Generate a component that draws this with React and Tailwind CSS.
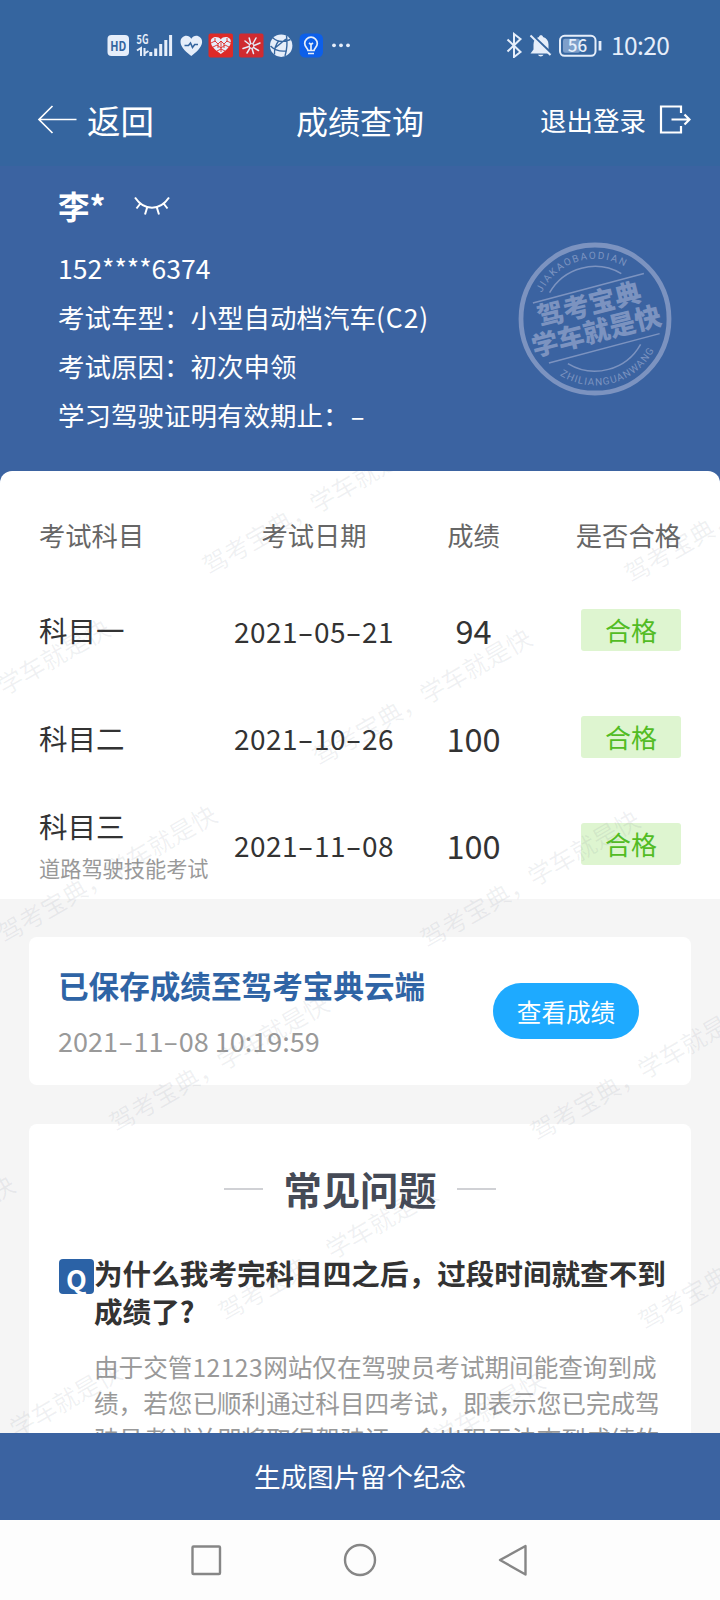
import React from "react";

const EXAMS = [
    { name: "科目一", date: "2021-05-21", score: "94" },
    { name: "科目二", date: "2021-10-26", score: "100" },
    { name: "科目三", note: "道路驾驶技能考试", date: "2021-11-08", score: "100" },
];

// centre of the first glyph of each repeated mark, relative to the scroll area
const MARKS = [
    [215, 89], [637, 97], [-97, 271], [325, 280], [10, 457], [433, 462],
    [122, 646], [543, 655], [-192, 827], [231, 835], [651, 844], [-85, 1014], [338, 1023],
];

// dashes are stretched to the width of a digit
function DateText({ value }) {
    return value.split("").map((c, i) =>
        c === "-" ? <span key={i} className="inline-block w-[0.57em] scale-x-165 text-center">-</span> : c
    );
}

function StatusBar() {
    return (
        <div className="flex h-[90px] items-center pl-[107px] pr-[50px] text-[#e6eefa]">
            <svg className="h-[26px] w-[244px] shrink-0" viewBox="107 32 244 26" fill="currentColor">
                {/* HD */}
                <rect x="107.5" y="35" width="21.5" height="21" rx="4" />
                <text x="118.3" y="50.5" fontSize="13.5" fontWeight="700" textAnchor="middle" textLength="16" lengthAdjust="spacingAndGlyphs" fill="#35659f">HD</text>
                {/* 5G signal */}
                <text x="136.5" y="43.500" fontSize="12.500" fontWeight="700" textLength="12" lengthAdjust="spacingAndGlyphs">5G</text>
                <path d="M137 50.500l4-2.500v8M144.500 48v8M144.500 53.500l4-2.500" fill="none" stroke="currentColor" strokeWidth="2" />
                <path d="M150.800 56v-4M155.700 56v-7.500M160.700 56v-12M165.800 56v-16M170.600 56v-21" stroke="currentColor" strokeWidth="3" />
                {/* health */}
                <path d="M191.300 56c-4-3-10.800-8.500-10.800-14 0-6.500 8-8.500 10.800-3.200 2.800-5.300 10.800-3.300 10.800 3.200 0 5.500-6.800 11-10.800 14z" />
                <path d="M184.500 45.500h4l2-2.500 2 4.500 2.200-3h3.300" fill="none" stroke="#35659f" strokeWidth="1.600" />
                {/* red apps */}
                <rect x="208.500" y="33.500" width="24.500" height="24" rx="2" fill="#dd2a27" />
                <path d="M220.800 54c-4-3-10-7-10-12.200 0-5.500 7.500-6 10-2.300 2.500-3.700 10-3.200 10 2.300 0 5.200-6 9.200-10 12.200z" />
                <path d="M211 43l4-2 3 3 3-3 3 3 3-3 4 2M213 47l4-2 4 3 4-3 4 2M217 51l4-2 4 2M215 38v4M218 44v4M221 41v11M224 44v4M227 38v4" fill="none" stroke="#dd2a27" strokeWidth="0.900" />
                <rect x="239" y="33.500" width="24.500" height="24" rx="2" fill="#cf2b30" />
                <path d="M250.700 43.500l-1.500-5.500M253 43.500l3-5.500M254 45.500l6-2.500M253.500 47.500l5 3M252 48.500l1.500 5M250 48l-3 5M249 46.500l-6 2M249.500 44.500l-4.500-3.500" fill="none" stroke="currentColor" strokeWidth="1.500" strokeLinecap="round" />
                <circle cx="251.500" cy="46" r="2.400" fill="none" stroke="currentColor" />
                {/* browser */}
                <circle cx="281.200" cy="45.700" r="11.200" />
                <path d="M273 38q7 6 17.500 1.500M286.500 35.500q1.500 11-1.500 20.500M270.500 46q6 6 15.500 5M279 40.500q-5 6-4.500 14M275 48l11-9" fill="none" stroke="#35659f" strokeWidth="1.400" />
                {/* bulb */}
                <rect x="299.500" y="33.500" width="23.500" height="24" rx="5.500" fill="#0d5fe9" />
                <path d="M308 50.500c0-2-3.300-3.500-3.300-7a6.300 6.300 0 0 1 12.600 0c0 3.500-3.300 5-3.300 7zM308 53.500h6M311 50v-6M309 43l2 1.500 2-1.500" fill="none" stroke="currentColor" strokeWidth="1.700" />
                <circle cx="334" cy="45.300" r="1.900" /><circle cx="341" cy="45.300" r="1.900" /><circle cx="348" cy="45.300" r="1.900" />
            </svg>
            <svg className="ml-auto h-[26px] w-[98px] shrink-0" viewBox="505 32 98 26" fill="none" stroke="currentColor">
                <path d="M507.500 39.500l13 12.500-6.500 5v-23l6.500 5-13 12.500" strokeWidth="2" />
                <path d="M530.500 53.500l3-4v-5c0-4 2-6.500 5.500-7.500 0-2.500 4-2.500 4 0 3.500 1 5.500 3.500 5.500 7.500v5l3 4z" fill="currentColor" stroke="none" />
                <path d="M538 54.800a3 3 0 0 0 5.500 0z" fill="currentColor" stroke="none" />
                <path d="M531.500 34.500l20 19" stroke="#35659f" strokeWidth="2.500" />
                <path d="M530.500 35.500l20 19.500" strokeWidth="2" />
                <rect x="560" y="35.800" width="35.500" height="20" rx="4.500" strokeWidth="2" />
                <rect x="563" y="38.800" width="17" height="14" rx="2" fill="#7e9fca" stroke="none" />
                <path d="M600 41v9.500" strokeWidth="2.800" />
                <text x="577.500" y="52" fontSize="17" fontWeight="500" textAnchor="middle" fill="currentColor" stroke="none">56</text>
            </svg>
            <span className="ml-[8px] w-[59px] whitespace-nowrap text-[24.500px] leading-none tracking-[-0.600px]">10:20</span>
        </div>
    );
}

function TitleBar() {
    return (
        <div className="grid h-[76px] grid-cols-[259px_128px_1fr] pb-[16px] pl-[37px] pr-[29px] text-white">
            <div className="flex items-center">
                <svg className="h-[30px] w-[40px]" viewBox="0 0 40 30" fill="none" stroke="currentColor" strokeWidth="1.700">
                    <path d="M15.500 1L2 14.500 15.500 28M2 14.500h37.500" />
                </svg>
                <span className="ml-[10px] text-[33.500px] leading-none">返回</span>
            </div>
            <span className="self-center text-[32px] leading-none">成绩查询</span>
            <div className="flex items-center justify-end">
                <span className="text-[26.500px] leading-none">退出登录</span>
                <svg className="ml-[13px] h-[30px] w-[32px]" viewBox="0 0 32 30" fill="none" stroke="currentColor" strokeWidth="2.200">
                    <path d="M22 8V1.500H2v26h20V21M12.500 14.500H30M25.500 9.500l5 5-5 5" />
                </svg>
            </div>
        </div>
    );
}

function Stamp() {
    return (
        <svg className="h-[156px] w-[156px]" viewBox="17.400 20.700 156 156" fill="none" stroke="currentColor">
            <defs>
                <path id="stamp-top" d="M40 78A59 59 0 0 1 152 80" />
                <path id="stamp-bottom" d="M50 147A66.500 66.500 0 0 0 161 111" />
            </defs>
            <circle cx="95.400" cy="98.700" r="74" strokeWidth="4.800" />
            <path d="M50 72.300A52.300 52.300 0 0 1 121.700 53.300M68.300 143.300A52.300 52.300 0 0 0 141 124M33.300 82.700l111-29.400M49.300 142.700l110.700-29.400" strokeWidth="1.500" />
            <g fill="currentColor" stroke="none">
                <text transform="translate(40.500 106.500) rotate(-14.200)" fontSize="26.500" fontWeight="900">驾考宝典</text>
                <text transform="translate(35 136.500) rotate(-14.200)" fontSize="26.500" fontWeight="900">学车就是快</text>
                <g fontSize="10" style={{ fontFamily: "Roboto, sans-serif" }}>
                    <text textLength="97"><textPath href="#stamp-top" startOffset="6">JIAKAOBAODIAN</textPath></text>
                    <text textLength="109"><textPath href="#stamp-bottom" startOffset="13">ZHILIANGUANWANG</textPath></text>
                </g>
            </g>
        </svg>
    );
}

function Profile() {
    return (
        <div className="flex h-[305px] shrink-0 justify-between bg-[#3b63a1] pl-[58px] pr-[47px] text-white">
            <div className="pt-[16px]">
                <div className="flex h-[48px] items-center">
                    <span className="text-[31.500px] font-bold leading-none">李*</span>
                    <svg className="ml-[29px] h-[20px] w-[36px]" viewBox="0 0 36 20" fill="none" stroke="currentColor" strokeWidth="2">
                        <path d="M1 1.500C10 15 26 15 35 1.500M6 8l-3.500 4.500M13 12l-2 6.500M23 12l2 6.500M30 8l3.500 4.500" />
                    </svg>
                </div>
                <div className="mt-[13px] text-[26.500px] leading-[49px]">
                    <p>152****6374</p>
                    <p>考试车型：小型自动档汽车<span className="tracking-[0.900px]">(C2)</span></p>
                    <p>考试原因：初次申领</p>
                    <p>学习驾驶证明有效期止：<DateText value="-" /></p>
                </div>
            </div>
            <div className="pt-[75px] text-[#7c93c0]">
                <Stamp />
            </div>
        </div>
    );
}

function ExamTable() {
    return (
        <div className="bg-[#3b63a1]">
            <div className="h-[428px] rounded-t-[12px] bg-white pl-[39px] pr-[39px] pt-[38px] text-[#333]">
                <div className="grid h-[52px] grid-cols-[195px_160px_159px_128px] items-center text-[26.300px] leading-none text-[#666]">
                    <span>考试科目</span>
                    <span className="text-center">考试日期</span>
                    <span className="text-center">成绩</span>
                    <span className="text-right">是否合格</span>
                </div>
                <div className="pt-[16px]">
                    {EXAMS.map((exam) => (
                        <div key={exam.name} className="grid h-[107.300px] grid-cols-[195px_160px_159px_128px] items-center">
                            <div className="whitespace-nowrap text-[28.500px] leading-none">
                                {exam.name}
                                {exam.note && <p className="mt-[17px] text-[21.200px] leading-none text-[#999]">{exam.note}</p>}
                            </div>
                            <span className="whitespace-nowrap text-center text-[28px] leading-none tracking-[0.450px]"><DateText value={exam.date} /></span>
                            <span className="text-center text-[32.500px] leading-none">{exam.score}</span>
                            <span className="-mt-[2px] flex h-[42px] w-[100px] items-center justify-center justify-self-end rounded-[3px] bg-[#def5d0] text-[26px] leading-none text-[#52bc24]">合格</span>
                        </div>
                    ))}
                </div>
            </div>
        </div>
    );
}

function SavedCard() {
    return (
        <div className="mx-[29px] mt-[38px] flex h-[148px] items-center justify-between rounded-[8px] bg-white pl-[29px] pr-[52px]">
            <div className="pt-[3px]">
                <p className="text-[30.600px] font-bold leading-[40px] text-[#2f64a5]">已保存成绩至驾考宝典云端</p>
                <p className="mt-[16px] text-[27px] leading-[40px] text-[#999]"><DateText value="2021-11-08 10:19:59" /></p>
            </div>
            <button className="h-[56px] w-[146px] rounded-full bg-[#1eaaff] text-[24.600px] leading-none text-white">查看成绩</button>
        </div>
    );
}

function Faq() {
    return (
        <div className="mx-[29px] mt-[39px] h-[500px] rounded-[8px] bg-white pl-[30px] pr-[20px] pt-[35px]">
            <div className="mr-[10px] flex h-[60px] items-center justify-center gap-[20px]">
                <span className="h-[2px] w-[39px] bg-[#d0d1d5]" />
                <span className="text-[38.300px] font-bold leading-none text-[#454a56]">常见问题</span>
                <span className="h-[2px] w-[39px] bg-[#d0d1d5]" />
            </div>
            <div className="mt-[35px] flex text-[#333]">
                <span className="mt-[5px] flex h-[35px] w-[35px] shrink-0 items-center justify-center rounded-[4px] bg-[#2b62a6] pt-[3px] text-[27px] font-bold leading-none text-white">Q</span>
                <div>
                    <p className="whitespace-nowrap text-[28.600px] font-bold leading-[38px]">为什么我考完科目四之后，过段时间就查不到<br />成绩了?</p>
                    <p className="mt-[18px] whitespace-nowrap text-[24.600px] leading-[36px] text-[#999]">
                        由于交管<span className="tracking-[0.500px]">12123</span>网站仅在驾驶员考试期间能查询到成<br />
                        绩，若您已顺利通过科目四考试，即表示您已完成驾<br />
                        驶员考试并即将取得驾驶证，会出现无法查到成绩的
                    </p>
                </div>
            </div>
        </div>
    );
}

function Watermark() {
    return (
        <div className="pointer-events-none absolute inset-0 overflow-hidden">
            {MARKS.map(([x, y]) => (
                <span
                    key={`${x}-${y}`}
                    className="absolute origin-[13px_13px] -rotate-30 whitespace-nowrap text-[24.800px] leading-[26px] text-[#5a6478]/9"
                    style={{ left: x - 13, top: y - 13 }}
                >
                    驾考宝典，学车就是快
                </span>
            ))}
        </div>
    );
}

function NavBar() {
    return (
        <div className="flex h-[80px] shrink-0 items-center justify-center bg-[#fdfdfd]">
            <svg className="h-[34px] w-[340px]" viewBox="190 1543 340 34" fill="none" stroke="#868686" strokeWidth="2.400" strokeLinejoin="round">
                <rect x="192.500" y="1546.500" width="27.500" height="27.500" rx="1" />
                <circle cx="360" cy="1560" r="15" />
                <path d="M525.500 1546v28.500L500 1560z" />
            </svg>
        </div>
    );
}

export default function App() {
    return (
        <div className="flex h-[1600px] w-[720px] flex-col overflow-hidden bg-[#f5f5f5] font-['Noto_Sans_CJK_SC',sans-serif]">
            <div className="shrink-0 bg-[#35659f]">
                <StatusBar />
                <TitleBar />
            </div>
            <Profile />
            <div className="relative h-[962px] shrink-0 overflow-hidden">
                <ExamTable />
                <SavedCard />
                <Faq />
                <Watermark />
            </div>
            <button className="h-[87px] shrink-0 bg-[#3b63a1] text-[26.500px] leading-none text-white">生成图片留个纪念</button>
            <NavBar />
        </div>
    );
}
